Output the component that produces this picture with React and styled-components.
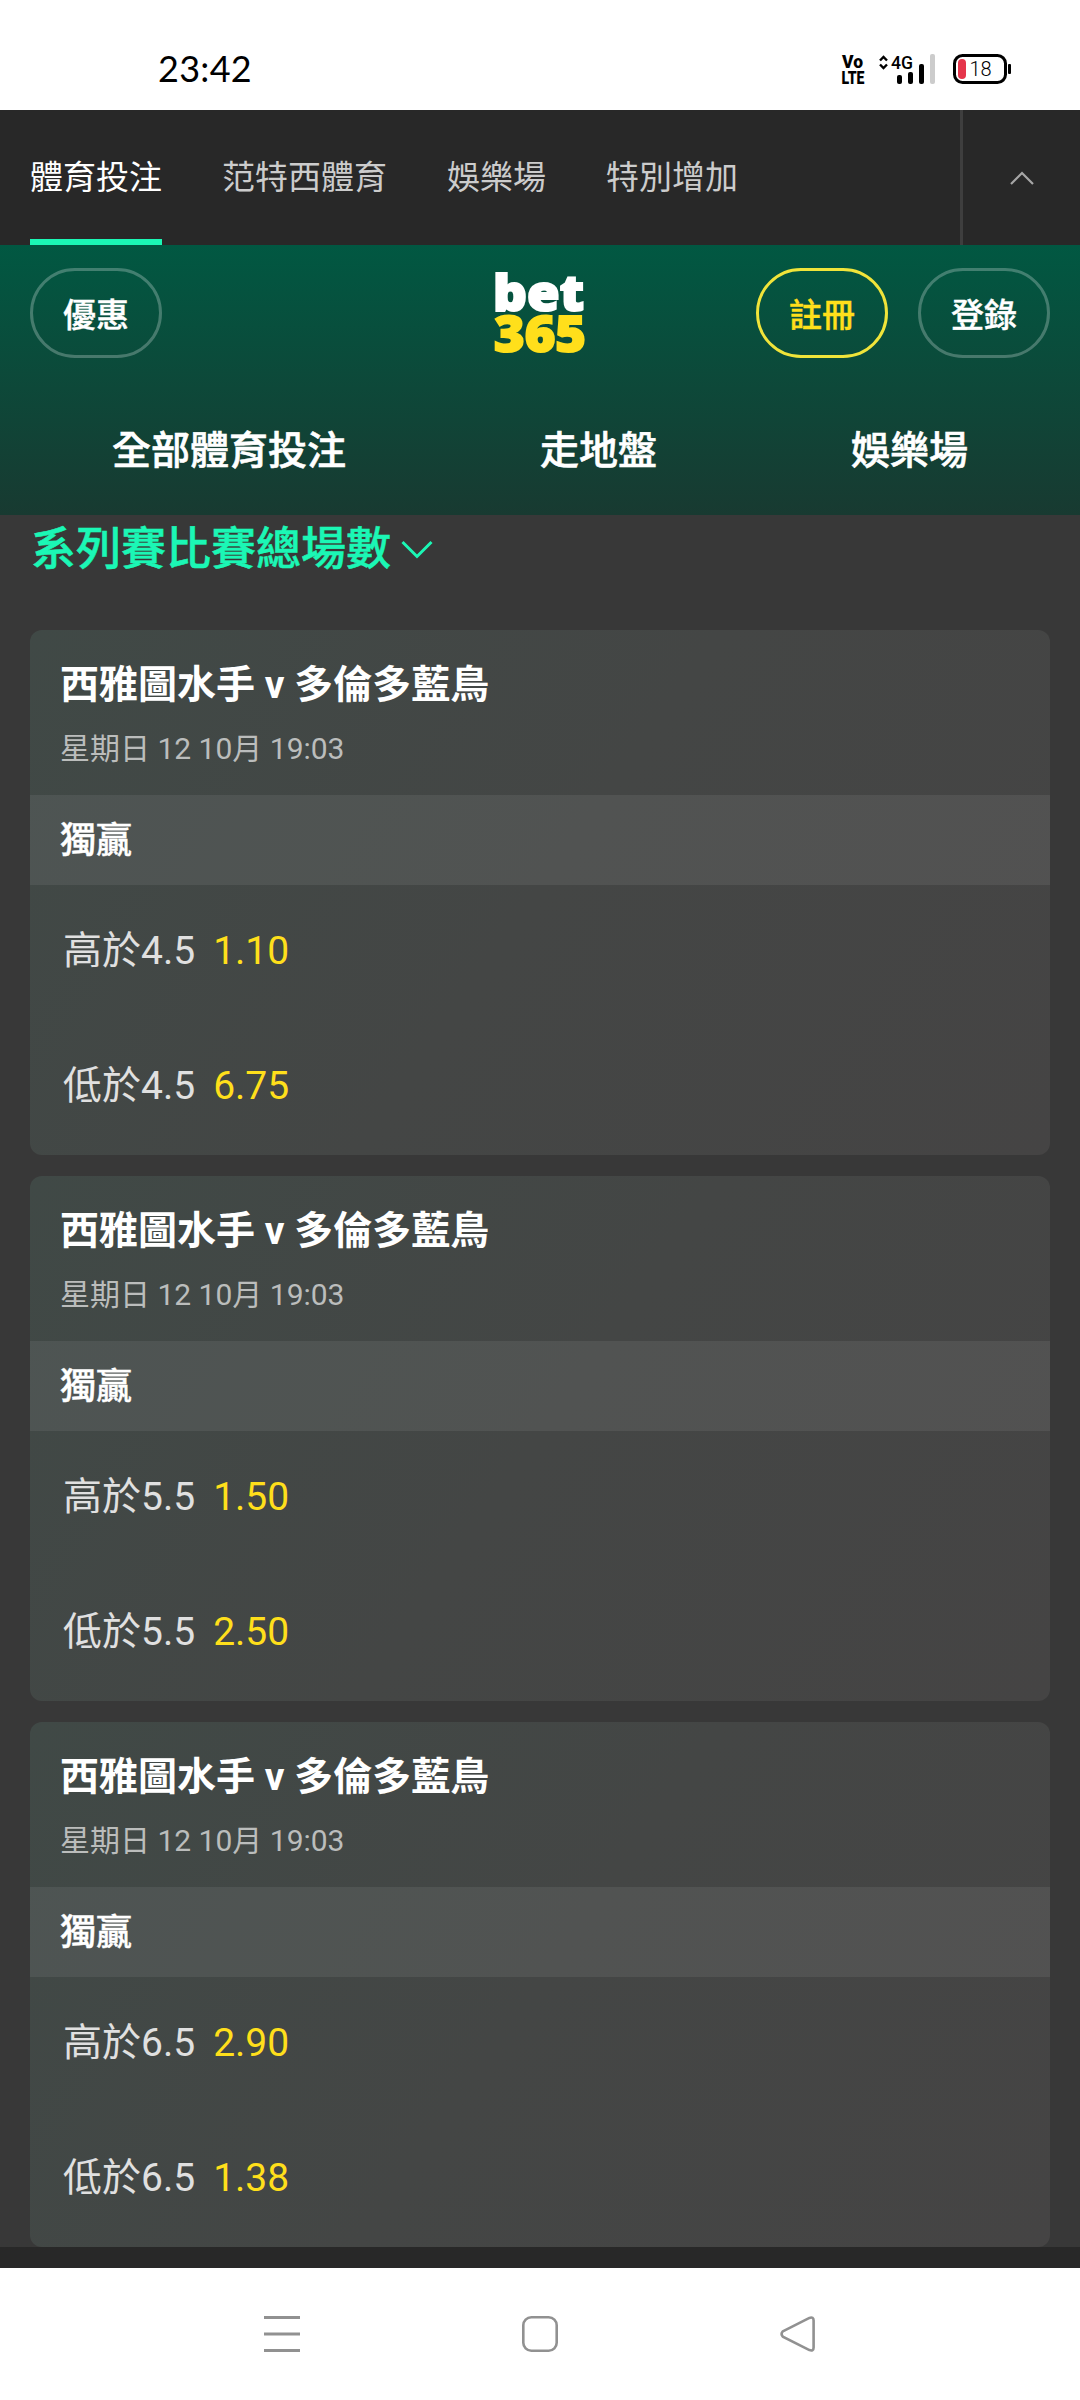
import React, { useState } from 'react';
import styled, { createGlobalStyle } from 'styled-components';

const TABS = ['體育投注', '范特西體育', '娛樂場', '特別增加'];
const NAVS = ['全部體育投注', '走地盤', '娛樂場'];
const MARKETS = [
  { line: '4.5', over: '1.10', under: '6.75' },
  { line: '5.5', over: '1.50', under: '2.50' },
  { line: '6.5', over: '2.90', under: '1.38' },
];

function StatusIcons() {
  return (
    <svg width="176" height="40" viewBox="838 50 176 40">
      {/* VoLTE */}
      <StatusText x="842" y="68" fontSize="18" fontWeight="900" textLength="21" lengthAdjust="spacingAndGlyphs">
        Vo
      </StatusText>
      <StatusText x="841.5" y="84" fontSize="19" fontWeight="900" textLength="23" lengthAdjust="spacingAndGlyphs">
        LTE
      </StatusText>
      {/* 4G */}
      <path d="M880 60.5l3.5-3.5 3.5 3.5M880 64.5l3.5 3.5 3.5-3.5" fill="none" stroke="#000" strokeWidth="2.4" />
      <StatusText x="891" y="69" fontSize="19" fontWeight="500" textLength="22" lengthAdjust="spacingAndGlyphs">
        4G
      </StatusText>
      <rect x="897" y="75" width="5" height="9" rx="2" />
      <rect x="908" y="72" width="5" height="12" rx="2" />
      <rect x="919" y="64" width="5" height="20" rx="2" />
      <rect x="930" y="54" width="5" height="30" rx="2" fill="#ccc" />
      {/* battery */}
      <rect x="954.5" y="55.5" width="51" height="27" rx="8" fill="none" stroke="#000" strokeWidth="3" />
      <rect x="958" y="59" width="8" height="20" rx="4" fill="#e5354b" />
      <StatusText x="969.5" y="76" fontSize="20" fontWeight="300" textLength="22">
        18
      </StatusText>
      <rect x="1008" y="64" width="3" height="10" rx="1" />
    </svg>
  );
}

function Logo() {
  return (
    <svg width="96" height="90" viewBox="492 268 96 90" overflow="visible">
      <LogoText x="493" y="310.5" $color="#fff" textLength="91" lengthAdjust="spacingAndGlyphs">
        bet
      </LogoText>
      <LogoText x="494" y="352" $color="#ffdf1b" textLength="92" lengthAdjust="spacingAndGlyphs">
        365
      </LogoText>
    </svg>
  );
}

function MarketCard({ market }) {
  return (
    <Card>
      <CardHead>
        <MatchTitle>西雅圖水手 v 多倫多藍鳥</MatchTitle>
        <MatchDate>星期日 12 10月 19:03</MatchDate>
      </CardHead>
      <MarketBar>獨贏</MarketBar>
      <OddsRow>
        高於{market.line}
        <Odds>{market.over}</Odds>
      </OddsRow>
      <OddsRow>
        低於{market.line}
        <Odds>{market.under}</Odds>
      </OddsRow>
    </Card>
  );
}

function App() {
  const [tab, setTab] = useState(TABS[0]);

  return (
    <>
      <GlobalStyle />
      <Page>
        <StatusBar>
          <Clock>23:42</Clock>
          <StatusIcons />
        </StatusBar>

        <TabBar>
          <TabList>
            {TABS.map(name => (
              <Tab key={name} $active={name === tab} onClick={() => setTab(name)}>
                {name}
              </Tab>
            ))}
          </TabList>
          <CollapseButton aria-label="收起">
            <svg width="26" height="16" viewBox="0 0 26 16">
              <path d="M2 14L13 3l11 11" fill="none" stroke="#a6a6a6" strokeWidth="2.2" />
            </svg>
          </CollapseButton>
        </TabBar>

        <Header>
          <HeaderTop>
            <HeaderSide>
              <PillButton>優惠</PillButton>
            </HeaderSide>
            <Logo />
            <HeaderSide $end>
              <PillButton $join>註冊</PillButton>
              <PillButton>登錄</PillButton>
            </HeaderSide>
          </HeaderTop>
          <Nav>
            {NAVS.map(name => (
              <NavItem key={name}>{name}</NavItem>
            ))}
          </Nav>
        </Header>

        <Content>
          <Heading>
            系列賽比賽總場數
            <svg width="32" height="22" viewBox="0 0 32 22">
              <path d="M1.5 2L16 16.5 30.5 2" fill="none" stroke="#1bf7b5" strokeWidth="3" />
            </svg>
          </Heading>
          <CardList>
            {MARKETS.map(market => (
              <MarketCard key={market.line} market={market} />
            ))}
          </CardList>
        </Content>

        <Footer />

        <SystemNav>
          <svg width="36" height="36" viewBox="0 0 36 36">
            <path d="M0 1.5h36M0 18h36M0 34.5h36" stroke="#919191" strokeWidth="3" />
          </svg>
          <svg width="36" height="36" viewBox="0 0 36 36">
            <rect x="1.3" y="1.3" width="33.4" height="33.4" rx="8" fill="none" stroke="#919191" strokeWidth="2.6" />
          </svg>
          <svg width="36" height="36" viewBox="0 0 36 36">
            <path
              d="M2.8 15.4L29.4 1.9Q33.6.6 33.6 4.6V31.4Q33.6 35.4 29.4 34.1L2.8 20.6Q.4 18 2.8 15.4Z"
              fill="none"
              stroke="#919191"
              strokeWidth="2.6"
            />
          </svg>
        </SystemNav>
      </Page>
    </>
  );
}
export default App;

const GlobalStyle = createGlobalStyle`
  * {
    box-sizing: border-box;
  }
  body {
    margin: 0;
    background: #fff;
    font-family: Roboto, 'Noto Sans CJK TC', sans-serif;
  }
  button {
    padding: 0;
    border: 0;
    background: none;
    font-family: inherit;
  }
  svg {
    display: block;
    flex: none;
  }
`;

const Page = styled.div`
  display: flex;
  flex-direction: column;
  width: 1080px;
  height: 2400px;
  overflow: hidden;
`;

const StatusBar = styled.div`
  display: flex;
  justify-content: space-between;
  align-items: center;
  height: 110px;
  padding: 30px 66px 0 158px;
`;
const Clock = styled.span`
  padding-bottom: 5px;
  font-family: Lato, sans-serif;
  font-size: 36px;
  line-height: 40px;
  letter-spacing: 0.3px;
  color: #000;
`;
const StatusText = styled.text`
  font-family: Roboto, sans-serif;
  fill: #000;
`;

const TabBar = styled.div`
  display: flex;
  height: 135px;
  background: #282828;
`;
const TabList = styled.div`
  display: flex;
  flex: 1;
  gap: 60px;
  padding-left: 30px;
`;
const Tab = styled.button`
  height: 135px;
  padding-bottom: 5px;
  border-top: 6px solid transparent;
  border-bottom: 6px solid ${props => (props.$active ? '#1bf7b5' : 'transparent')};
  font-size: 33px;
  color: ${props => (props.$active ? '#fff' : '#ccc')};
`;
const CollapseButton = styled.button`
  display: flex;
  align-items: center;
  justify-content: center;
  width: 120px;
  border-left: 3px solid #3e3e3e;
`;

const Header = styled.div`
  height: 270px;
  padding-top: 23px;
  background: linear-gradient(#015842, #183a31);
`;
const HeaderTop = styled.div`
  display: flex;
  align-items: center;
  height: 90px;
  padding: 0 30px;
`;
const HeaderSide = styled.div`
  display: flex;
  flex: 1;
  gap: 30px;
  justify-content: ${props => (props.$end ? 'flex-end' : 'flex-start')};
`;
const PillButton = styled.button`
  width: 132px;
  height: 90px;
  border: 3px solid ${props => (props.$join ? '#f0e43a' : 'rgba(255, 255, 255, 0.25)')};
  border-radius: 45px;
  font-size: 33px;
  font-weight: 500;
  -webkit-text-stroke: 0.4px;
  color: ${props => (props.$join ? '#ffdf1b' : '#fff')};
`;
const LogoText = styled.text`
  font-family: 'Open Sans', sans-serif;
  font-size: 49px;
  font-weight: 800;
  fill: ${props => props.$color};
  stroke: ${props => props.$color};
  stroke-width: 2px;
`;

const Nav = styled.div`
  display: flex;
  justify-content: space-around;
  align-items: center;
  height: 157px;
  padding: 29px 15px 0;
`;
const NavItem = styled.div`
  font-size: 39px;
  font-weight: 500;
  line-height: 60px;
  -webkit-text-stroke: 0.6px;
  color: #fff;
`;

const Content = styled.div`
  height: 1732px;
  padding: 0 30px;
  background: #383838;
`;
const Heading = styled.div`
  display: flex;
  align-items: center;
  gap: 10px;
  height: 115px;
  padding: 0 0 55px 1px;
  font-size: 45px;
  font-weight: 500;
  -webkit-text-stroke: 0.5px;
  color: #1bf7b5;

  svg {
    margin-top: 11px;
  }
`;

const CardList = styled.div`
  display: flex;
  flex-direction: column;
  gap: 21px;
`;
const Card = styled.div`
  height: 525px;
  border-radius: 12px;
  background: linear-gradient(125deg, #404946, #444645 50%, #454444);
`;
const CardHead = styled.div`
  height: 165px;
  padding: 27px 30px 0;
`;
const MatchTitle = styled.div`
  font-size: 39px;
  font-weight: 700;
  line-height: 57px;
  color: #fff;
`;
const MatchDate = styled.div`
  padding-top: 13px;
  font-size: 30px;
  line-height: 44px;
  color: #bbbdbc;
`;
const MarketBar = styled.div`
  height: 90px;
  padding-left: 30px;
  background: rgba(255, 255, 255, 0.07);
  font-size: 36px;
  font-weight: 500;
  line-height: 92px;
  -webkit-text-stroke: 0.4px;
  color: #fff;
`;
const OddsRow = styled.div`
  display: flex;
  gap: 18px;
  height: 135px;
  padding-left: 33px;
  font-size: 39px;
  line-height: 133px;
  color: #e0e0e0;
`;
const Odds = styled.span`
  color: #ffdf1b;
`;

const Footer = styled.div`
  height: 21px;
  background: #282828;
`;
const SystemNav = styled.div`
  display: flex;
  align-items: center;
  justify-content: space-between;
  height: 132px;
  padding: 0 264px;
  background: #fff;
`;
